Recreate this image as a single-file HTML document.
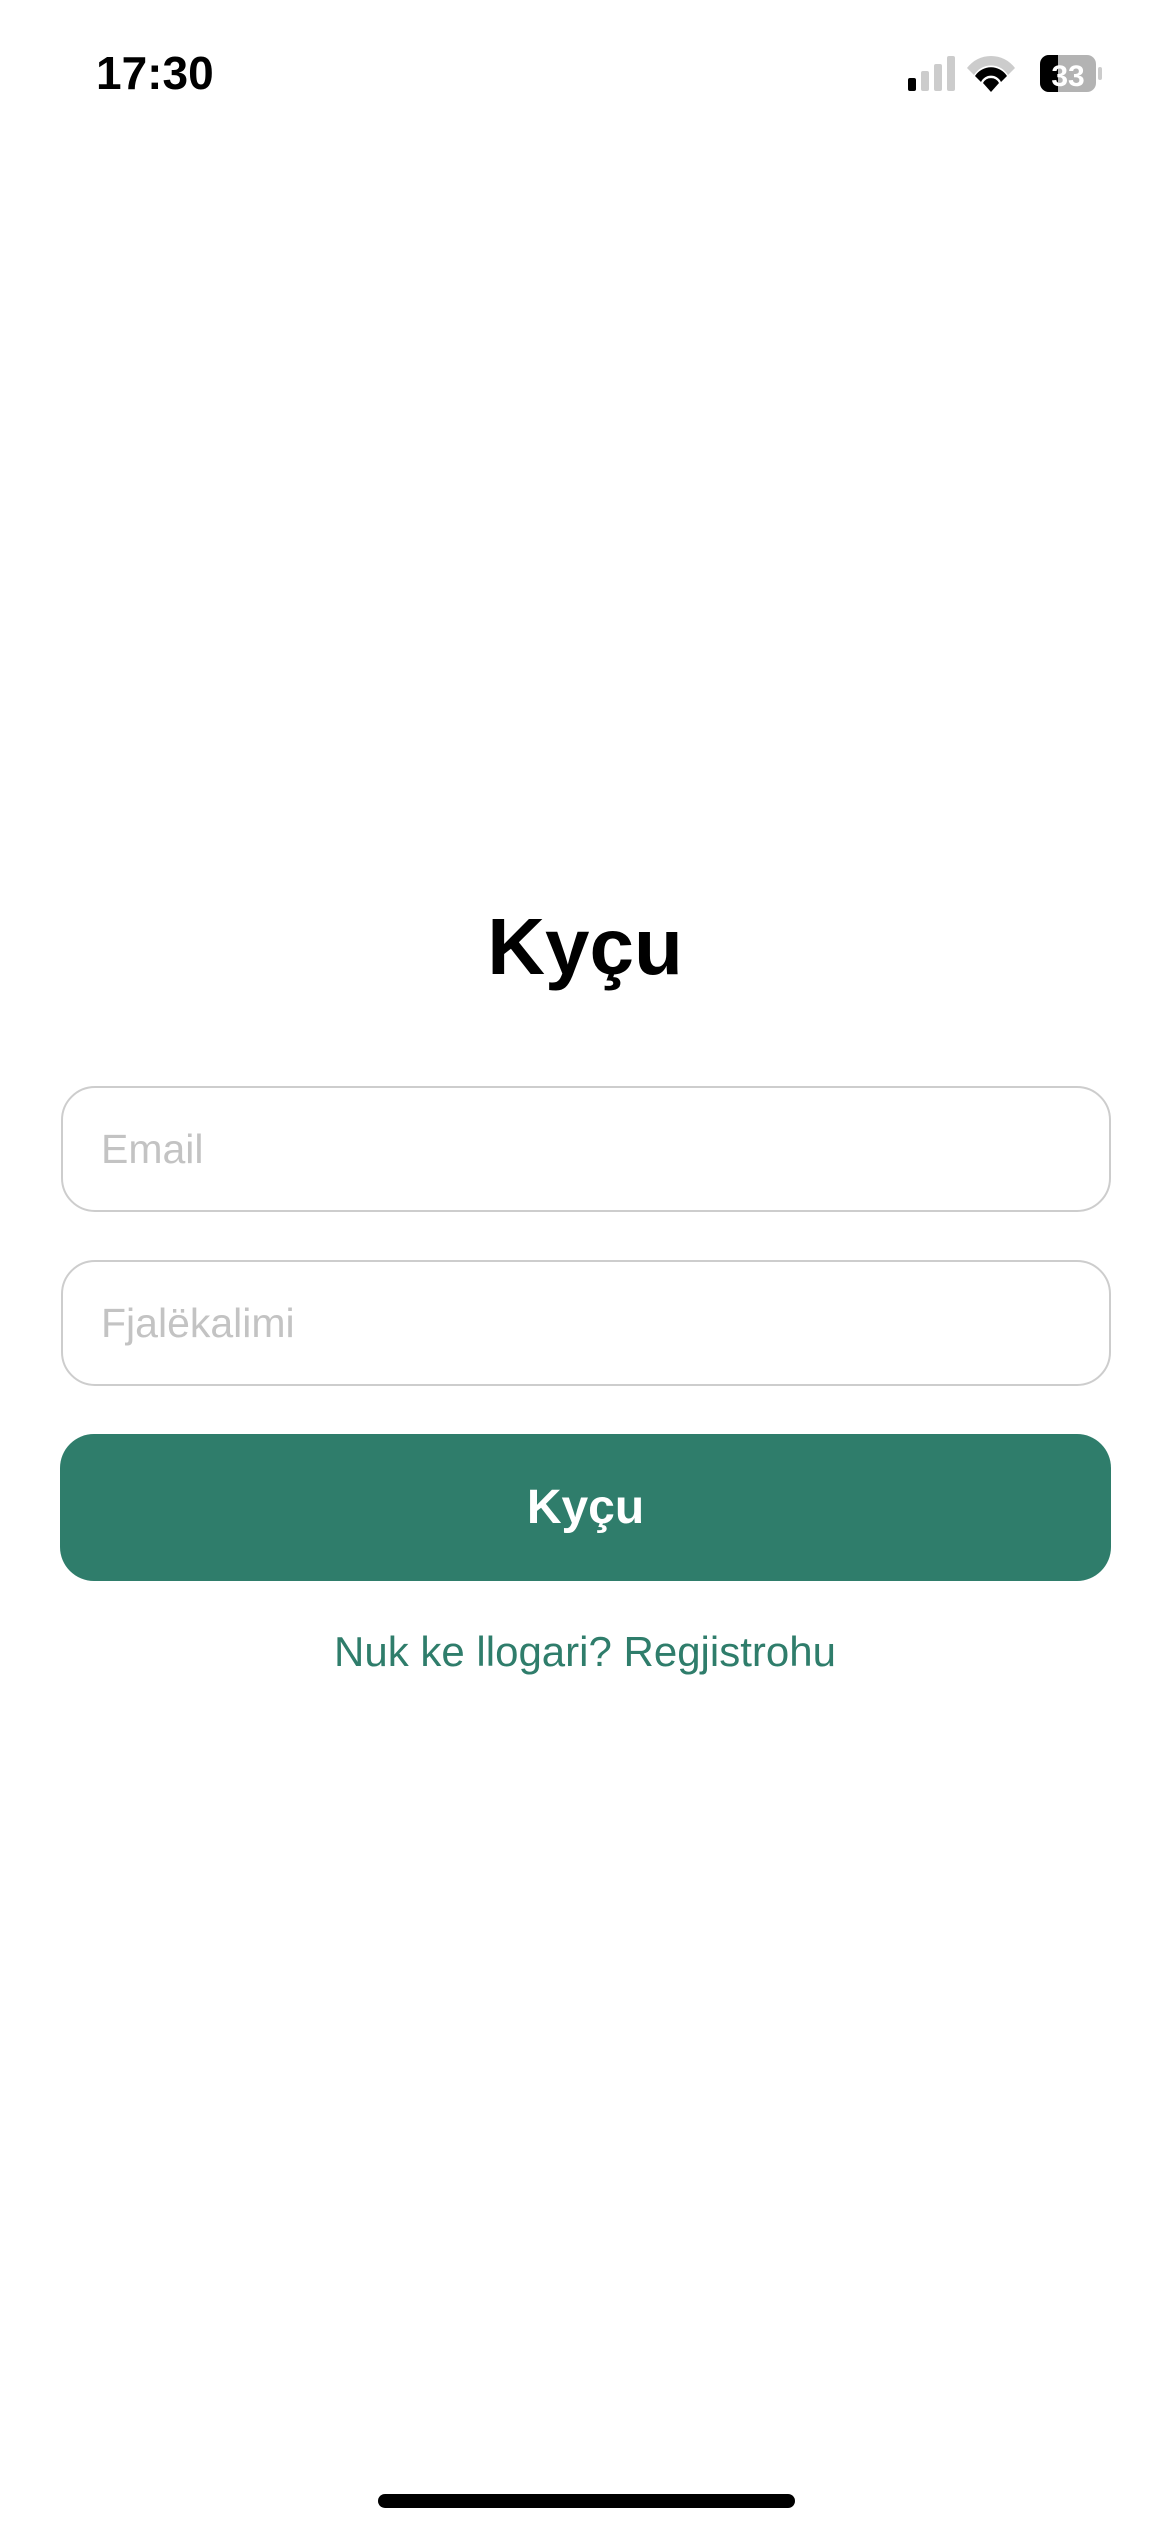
<!DOCTYPE html>
<html><head><meta charset="utf-8"><style>
html,body{margin:0;padding:0;background:#fff;}
body{width:1170px;height:2532px;position:relative;overflow:hidden;font-family:"Liberation Sans",sans-serif;}
.abs{position:absolute;}
.field{position:absolute;left:61px;width:1046px;height:122px;border:2.5px solid #cdcdcd;border-radius:34px;box-sizing:content-box;}
.ph{position:absolute;left:38px;top:0;line-height:122px;font-size:41px;color:#c3c3c3;}
</style></head><body>
<div class="abs" style="left:96px;top:46px;font-size:46px;font-weight:bold;">17:30</div>
<svg class="abs" style="left:905px;top:54px" width="210" height="40" viewBox="0 0 210 40">
<rect x="3" y="24" width="8" height="13" rx="2" fill="#000"/>
<rect x="16" y="17" width="8" height="20" rx="2" fill="#ccc"/>
<rect x="29" y="10" width="8" height="27" rx="2" fill="#ccc"/>
<rect x="42" y="2" width="8" height="35" rx="2" fill="#ccc"/>
<path d="M62 14 A30 30 0 0 1 110 14 L103 21 A20 20 0 0 0 69 21 Z" fill="#ccc"/>
<path d="M70 22 A19 19 0 0 1 102 22 L96 28 A11 11 0 0 0 76 28 Z" fill="#000"/>
<path d="M78 29 A9 9 0 0 1 94 29 L86 38 Z" fill="#000"/>
<rect x="135" y="1" width="56" height="37" rx="9" fill="#b3b3b3"/>
<path d="M144 1 H153 V38 H144 A9 9 0 0 1 135 29 V10 A9 9 0 0 1 144 1Z" fill="#000"/>
<rect x="193" y="13" width="4" height="13" rx="2" fill="#ccc"/>
<text x="163" y="32" font-family="Liberation Sans" font-weight="bold" font-size="30" fill="#fff" text-anchor="middle">33</text>
</svg>
<div class="abs" style="left:0;width:1170px;top:892px;text-align:center;font-size:80px;font-weight:bold;line-height:110px;">Kyçu</div>
<div class="field" style="top:1086px;"><div class="ph">Email</div></div>
<div class="field" style="top:1260px;"><div class="ph">Fjalëkalimi</div></div>
<div class="abs" style="left:60px;top:1434px;width:1051px;height:147px;background:#2f7d6b;border-radius:34px;color:#fff;font-weight:bold;font-size:48px;line-height:147px;text-align:center;">Kyçu</div>
<div class="abs" style="left:0;width:1170px;top:1625px;text-align:center;font-size:42px;line-height:54px;color:#2f7d6b;">Nuk ke llogari? Regjistrohu</div>
<div class="abs" style="left:378px;top:2494px;width:417px;height:14px;border-radius:7px;background:#000;"></div>
</body></html>
